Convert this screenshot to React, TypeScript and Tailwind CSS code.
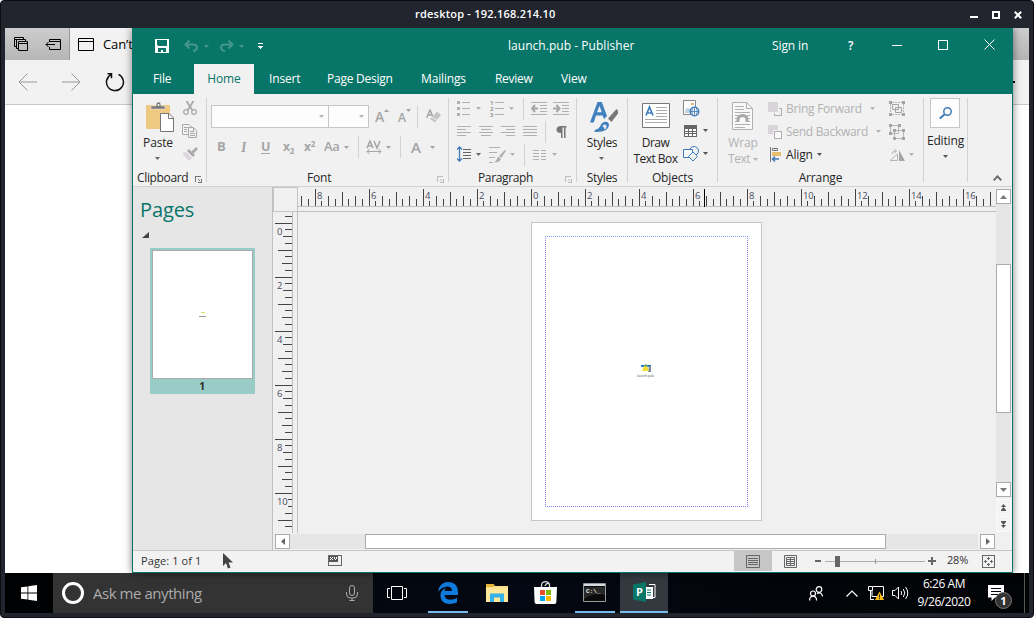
import React from "react";

type IconProps = { w: number; h: number; className?: string; crisp?: boolean; children: React.ReactNode };

function Icon({ w, h, className = "", crisp = false, children }: IconProps) {
  return (
    <svg
      width={w}
      height={h}
      viewBox={`0 0 ${w} ${h}`}
      fill="none"
      shapeRendering={crisp ? "crispEdges" : "auto"}
      className={`block shrink-0 ${className}`}
    >
      {children}
    </svg>
  );
}

const Caret = ({ className = "" }: { className?: string }) => (
  <Icon w={5} h={3} className={className}>
    <path d="M0 0h5L2.500 3z" fill="currentColor" />
  </Icon>
);

const Launcher = ({ className = "" }: { className?: string }) => (
  <Icon w={7} h={7} crisp className={className}>
    <path d="M0 0h6v1H1v5H0zM3 3h1v1H3zM4 4h1v1H4zM6 3h1v4H3V6h3z" fill="currentColor" />
  </Icon>
);

const VLine = ({ className = "" }: { className?: string }) => (
  <div className={`h-[22px] w-px shrink-0 bg-[#d2d2d2] ${className}`} />
);

const GroupLabel = ({ children }: { children: React.ReactNode }) => (
  <div className="flex h-4 items-center justify-center whitespace-nowrap">{children}</div>
);

const Lines = ({ rows, className = "" }: { rows: [number, number][]; className?: string }) => (
  <Icon w={14} h={12} crisp className={className}>
    {rows.map(([x, w], i) => (
      <rect key={i} x={x} y={i * 3} width={w} height={1} fill="currentColor" />
    ))}
  </Icon>
);

/* ---------- Browser in the background ---------- */

function Browser() {
  return (
    <div className="flex h-[545px] flex-col bg-white">
      <div className="flex h-8 bg-linear-to-b from-[#cdcdcd] to-[#b6b6b6]">
        <div className="flex w-[65px] items-center border-r border-[#999] text-black">
          <Icon w={14} h={14} className="ml-[9px]">
            <path d="M2.500 9.500h-2v-9h9v2M0 2.500h9M4 11.500h-1.500v-9h9v1.500M4.500 4.500h9v9h-9zM4 6.500h9" stroke="#000" />
          </Icon>
          <Icon w={16} h={11} className="ml-[17px]">
            <path d="M4.500 3V.5h11v10h-11V8M4.500 2.500h11M1 5.500h9M3.500 3L1 5.500 3.500 8" stroke="#000" />
          </Icon>
        </div>
        <div className="flex w-[300px] items-center bg-[#f2f2f2]">
          <Icon w={16} h={13} className="ml-2">
            <path d="M.5.5h15v12H.5zM0 3.500h16" stroke="#000" />
          </Icon>
          <span className="ml-[9px] pt-px text-[13px] tracking-[-0.1px] text-black">Can’t</span>
        </div>
      </div>
      <div className="flex h-[45px] items-center border-b border-[#c8c8c8] bg-[#f2f2f2]">
        <Icon w={19} h={18} className="ml-[13px]">
          <path d="M19 9H1M9.500.500L1 9l8.500 8.500" stroke="#999" />
        </Icon>
        <Icon w={19} h={18} className="ml-[25px]">
          <path d="M0 9h18M9.500.500L18 9l-8.500 8.500" stroke="#999" />
        </Icon>
        <Icon w={20} h={20} className="ml-6">
          <path d="M6 2.600A8.500 8.500 0 1 0 13.500 2.400M2.500 1.700h4v4.500" stroke="#111" strokeWidth="1.500" />
        </Icon>
        <div className="ml-auto mr-3.5 size-0.5 bg-black" />
      </div>
    </div>
  );
}

/* ---------- Publisher title and tabs ---------- */

function TitleRow() {
  return (
    <div className="flex h-9 items-center text-white">
      <Icon w={14} h={14} crisp className="ml-[22px]">
        <path d="M0 0h14v14H0z" fill="#fff" />
        <path d="M2 1h10v5l-1 1H3L2 6zM3 9h8v4H8v-2H6v2H3z" fill="#077568" />
      </Icon>
      <Icon w={15} h={12} className="ml-[15px]">
        <path d="M5.500.5L1.500 4.500l4 4M2 4.500h7q4 0 4 3t-4 3.500" stroke="#45978c" strokeWidth="2" />
      </Icon>
      <Caret className="ml-[5px] text-[#45978c]" />
      <Icon w={15} h={12} className="ml-[10px]">
        <path d="M9.500.5l4 4-4 4M13 4.500H6q-4 0-4 3T6 11" stroke="#45978c" strokeWidth="2" />
      </Icon>
      <Caret className="ml-[5px] text-[#45978c]" />
      <Icon w={5} h={6} crisp className="ml-[14px]">
        <path d="M0 0h5v1H0z" fill="#fff" />
        <path d="M0 3h5v1H4v1H3v1H2V5H1V4H0z" fill="#fff" />
      </Icon>
      <div className="ml-[245px] w-[264px] whitespace-nowrap pb-px text-[12px] tracking-[0.04px]">launch.pub - Publisher</div>
      <div className="w-[76px] whitespace-nowrap pb-px tracking-[-0.1px]">Sign in</div>
      <div className="w-[44px] pb-px text-[12px] font-semibold">?</div>
      <div className="-mt-px h-px w-[10px] bg-white" />
      <div className="-mt-[3px] ml-9 size-[10px] border border-white" />
      <Icon w={11} h={11} className="-mt-[3px] ml-[36px]">
        <path d="M.5.5l10 10M10.500.500l-10 10" stroke="#fff" />
      </Icon>
    </div>
  );
}

function TabRow() {
  return (
    <div className="flex h-[30px] items-center whitespace-nowrap text-white">
      <div className="w-[61px] pl-5">File</div>
      <div className="flex h-full w-[60px] items-center justify-center bg-[#f1f1f1] text-[#077568]">Home</div>
      <div className="ml-[15px] w-[58px]">Insert</div>
      <div className="w-[94px] tracking-[-0.250px]">Page Design</div>
      <div className="w-[74px]">Mailings</div>
      <div className="w-[66px] tracking-[-0.3px]">Review</div>
      <div>View</div>
    </div>
  );
}

/* ---------- Ribbon ---------- */

const group = "flex flex-col h-[92px] shrink-0";
const Divider = () => <div className="mt-1 h-[84px] w-px shrink-0 bg-[#d2d2d2]" />;

function Clipboard() {
  return (
    <div className={`${group} w-[73px]`}>
      <div className="flex h-[76px]">
        <div className="ml-[5px] flex w-[39px] flex-col items-center pt-2">
          <Icon w={28} h={30} className="ml-[5px]">
            <rect x="0" y="3" width="24" height="24" rx="1" fill="#eec980" />
            <path d="M5 7V4h5q0-4 2.500-4T15 4h4v3z" fill="#777" stroke="#f1f1f1" strokeWidth="0.500" />
            <circle cx="12.500" cy="3" r="1" fill="#fff" />
            <path d="M14.500 11.500h8.500l4.500 4.500v13.500h-13z" fill="#fff" stroke="#777" />
            <path d="M22.500 11.500v5h5" stroke="#777" />
          </Icon>
          <span className="ml-px mt-[2px] leading-[17px]">Paste</span>
          <Caret className="mt-[6px] text-[#666]" />
        </div>
        <div className="ml-[5px] flex w-[16px] flex-col items-center">
          <Icon w={14} h={14} className="mt-[7px]">
            <path d="M3.500 0l6 9.500M10.500 0l-6 9.500" stroke="#aaa" strokeWidth="1.800" />
            <circle cx="3" cy="11" r="2.300" stroke="#aaa" strokeWidth="1.300" />
            <circle cx="11" cy="11" r="2.300" stroke="#aaa" strokeWidth="1.300" />
          </Icon>
          <Icon w={16} h={14} className="mt-[9px]">
            <path d="M6 10.500H.5V.5H7l2 2v1M2 3.500h4M2 5.500h3M2 7.500h3M6.500 3.500h5l3 3v7h-8zM11.500 4v3M8 7.500h4M8 9.500h5M8 11.500h5" stroke="#aaa" />
          </Icon>
          <Icon w={16} h={14} className="mt-[9px]">
            <path d="M0 6l4-1 6 6-3 3z" fill="#dbd5db" />
            <path d="M5 4l2-2 6 6-2 2zM9.500 4.500L14 0l2 2-4.500 4.500z" fill="#aaa" />
          </Icon>
        </div>
      </div>
      <div className="flex h-4 items-center pl-[4px]">
        <span className="w-[58px] tracking-[-0.350px]">Clipboard</span>
        <Launcher className="mt-[3px] text-[#777]" />
      </div>
    </div>
  );
}

function FontGroup() {
  return (
    <div className={`${group} w-[241px]`}>
      <div className="flex h-[76px] flex-col pl-1 pt-[11px] text-[#a5a5a5]">
        <div className="flex h-[23px] items-center">
          <div className="flex h-[23px] w-[118px] items-center justify-end border border-[#c6c6c6] bg-[#fdfdfd] pr-[4px]">
            <Caret className="text-[#b5b5b5]" />
          </div>
          <div className="-ml-px flex h-[23px] w-[41px] items-center justify-end border border-[#c6c6c6] bg-[#fdfdfd] pr-[4px]">
            <Caret className="text-[#b5b5b5]" />
          </div>
          <div className="ml-[6px] mt-[1px] flex w-[22px]">
            <span className="text-[14px] font-semibold leading-none">A</span>
            <Icon w={5} h={3} className="-mt-[1px]"><path d="M0 3h5L2.500 0z" fill="#a5a5a5" /></Icon>
          </div>
          <div className="mt-[3px] flex w-[20px] pl-px">
            <span className="text-[12px] font-semibold leading-none">A</span>
            <Caret className="-mt-[3px]" />
          </div>
          <VLine />
          <div className="ml-[8px] flex">
            <Icon w={15} h={15}>
              <path d="M0.700 9L4 1l3 7M2 6h4" stroke="#a5a5a5" strokeWidth="1.500" />
              <path d="M11 2.500l4 3.500-6 7.500-5-3.500z" fill="#c5c5c5" />
              <path d="M5.500 7.500l5.500 4" stroke="#f1f1f1" />
            </Icon>
          </div>
        </div>
        <div className="mt-[8px] flex h-[22px] items-center whitespace-nowrap font-bold">
          <span className="ml-[6px] w-[22px] text-[13px]">B</span>
          <span className="w-[22px] pl-[2px] font-['Liberation_Serif'] text-[14px] italic">I</span>
          <span className="w-[22px] text-[12.500px]"><span className="inline-block h-[14px] border-b border-[#a5a5a5] leading-[14px]">U</span></span>
          <span className="w-[21px]">x<span className="relative top-[3px] text-[8px]">2</span></span>
          <span className="w-[20px]">x<span className="relative -top-[4px] text-[8px]">2</span></span>
          <span className="w-[20px] text-[13px] font-semibold tracking-[-0.300px]">Aa</span>
          <Caret />
          <VLine className="ml-[9px]" />
          <Icon w={16} h={14} className="ml-[7px]">
            <path d="M1 8L4 1l3 7M2 6h4M8 1l3 7 3-7" stroke="#a5a5a5" strokeWidth="1.500" />
            <path d="M1 11.500h14M3.500 9L1 11.500 3.500 14M12.500 9l2.500 2.500-2.500 2.500" stroke="#a5a5a5" />
          </Icon>
          <Caret className="ml-[4px]" />
          <VLine className="ml-[9px]" />
          <span className="ml-[10px] w-[19px] text-[15px] font-semibold">A</span>
          <Caret />
        </div>
      </div>
      <div className="flex h-4 items-center">
        <span className="w-[230px] pl-[100px]">Font</span>
        <Launcher className="mt-[3px] text-[#bbb]" />
      </div>
    </div>
  );
}

function ParagraphGroup() {
  return (
    <div className={`${group} w-[127px]`}>
      <div className="flex h-[76px] flex-col pl-2 pt-[3px] text-[#b0b0b0]">
        <div className="flex h-[23px] items-center">
          <Icon w={14} h={16} crisp className="-mt-px">
            <path d="M0 1h3v3H0zM0 7h3v3H0zM0 13h3v3H0zM5 2h8v1H5zM5 8h8v1H5zM5 14h8v1H5z" fill="#b0b0b0" />
          </Icon>
          <Caret className="ml-[5px]" />
          <div className="ml-[9px] flex w-[14px]">
            <div className="flex w-[5px] flex-col text-[6px] font-bold leading-[6px] text-[#999]"><span>1</span><span>2</span><span>3</span></div>
            <Icon w={9} h={16} crisp><path d="M0 2h9v1H0zM0 8h9v1H0zM0 14h9v1H0z" fill="#b0b0b0" /></Icon>
          </div>
          <Caret className="ml-[5px]" />
          <VLine className="ml-[9px]" />
          <Icon w={16} h={13} className="ml-[7px]">
            <path d="M0 .5h16M9 3.500h7M9 6.500h7M9 9.500h7M0 12.500h16" stroke="#b0b0b0" />
            <path d="M1 6.500h6M4 3L1 6.500 4 10" stroke="#a5a5a5" strokeWidth="2" />
          </Icon>
          <Icon w={16} h={13} className="ml-[6px]">
            <path d="M0 .5h16M9 3.500h7M9 6.500h7M9 9.500h7M0 12.500h16" stroke="#b0b0b0" />
            <path d="M0 6.500h6M3.500 3L6.500 6.500 3.500 10" stroke="#a5a5a5" strokeWidth="2" />
          </Icon>
        </div>
        <div className="flex h-[23px] items-center">
          <Lines rows={[[0, 14], [0, 9], [0, 14], [0, 9]]} />
          <Lines className="ml-2" rows={[[0, 14], [2, 10], [0, 14], [2, 10]]} />
          <Lines className="ml-2" rows={[[0, 14], [5, 9], [0, 14], [5, 9]]} />
          <Lines className="ml-2" rows={[[0, 14], [0, 14], [0, 14], [0, 14]]} />
          <VLine className="ml-2" />
          <Icon w={11} h={12} className="ml-[10px]">
            <path d="M10.500 0v1.500H9.500V12H8V1.500H6.500V12H5V7Q.5 7 .5 3.500T5 0z" fill="#777" />
          </Icon>
        </div>
        <div className="flex h-[23px] items-center">
          <Icon w={14} h={16} className="-mt-px">
            <path d="M2.500 1v14M0 3.500L2.500 1 5 3.500M0 12.500L2.500 15 5 12.500" stroke="#3f7ab8" strokeWidth="1.300" />
            <path d="M6 3.500h8M6 6.500h8M6 9.500h8M6 12.500h8" stroke="#666" />
          </Icon>
          <Caret className="ml-[5px] text-[#666]" />
          <Icon w={17} h={16} className="ml-[8px]">
            <path d="M0 .5h11M0 5.500h8M0 10.500h6M0 15.500h4" stroke="#b0b0b0" />
            <path d="M16 3l1 1-5 7-2-2zM9 9.500l3 2.500q-2 4-7 3.500 2-1 4-6z" fill="#b0b0b0" />
          </Icon>
          <Caret className="ml-[4px]" />
          <VLine className="ml-[9px]" />
          <Icon w={14} h={10} crisp className="ml-2">
            <path d="M0 0h6v1H0zM8 0h5v1H8zM0 3h6v1H0zM8 3h5v1H8zM0 6h6v1H0zM8 6h5v1H8zM0 9h6v1H0zM8 9h5v1H8z" fill="#b0b0b0" />
          </Icon>
          <Caret className="ml-[5px]" />
        </div>
      </div>
      <div className="flex h-4 items-center">
        <span className="w-[116px] pl-[29px] tracking-[-0.350px]">Paragraph</span>
        <Launcher className="mt-[3px] text-[#bbb]" />
      </div>
    </div>
  );
}

function StylesGroup() {
  return (
    <div className={`${group} w-[50px] tracking-[-0.3px]`}>
      <div className="flex h-[76px] flex-col items-center pt-2">
        <Icon w={28} h={30} className="ml-[3px]">
          <path d="M0 20.500L7.500 0h4.300L17 14l-3 3-1.300-3.500H6L3.800 20.500zM7 10.300h4.800L9.500 3.800z" fill="#4080bf" fillRule="evenodd" />
          <path d="M26.500 7L28 8.500v3L21.500 20 18 16.500z" fill="#777" />
          <path d="M14 20q5-1 5 3.500-1 6-12 6.500Q3 30 5 28q4-1 5.500-4.500Q11.500 20.500 14 20z" fill="#4080bf" />
          <path d="M14 22.500q3 0 2.500 2.500-.500 2-2 2.500 0-3-2.500-3z" fill="#f1f1f1" />
        </Icon>
        <span className="mt-[2px] leading-[17px]">Styles</span>
        <Caret className="-ml-px mt-[6px] text-[#666]" />
      </div>
      <GroupLabel>Styles</GroupLabel>
    </div>
  );
}

function ObjectsGroup() {
  return (
    <div className={`${group} w-[89px]`}>
      <div className="flex h-[76px]">
        <div className="flex w-[54px] shrink-0 flex-col items-center pl-[2px] pt-[9px]">
          <Icon w={28} h={25}>
            <path d="M.5.500h27v24H.5z" fill="#fff" stroke="#777" />
            <path d="M4 12.500L7.500 4l3.500 8.500M5.300 10h4.500" stroke="#4080bf" strokeWidth="1.700" />
            <path d="M14 4.500h11M14 7.500h11M14 10.500h11M14 13.500h11M3 16.500h22M3 19.500h22" stroke="#aaa" />
          </Icon>
          <span className="-ml-px mt-[7px] whitespace-nowrap text-center leading-4 tracking-[-0.550px]">Draw<br />Text Box</span>
        </div>
        <div className="flex flex-col">
          <Icon w={17} h={17} className="ml-px mt-[6px]">
            <path d="M12.500 7V.500h-12v14H8" fill="#fdfdfd" stroke="#888" />
            <path d="M2 13q0-5 3-5t3 5zM9 3h2v2H9z" fill="#bcd0e4" />
            <circle cx="9" cy="4" r="1.200" fill="#edb55c" />
            <circle cx="11.500" cy="11.500" r="4.300" fill="#f1f1f1" stroke="#3f7ab8" strokeWidth="1.300" />
            <path d="M7 11.500h9M11.500 7v9M9.500 8q-1.500 3.500 0 7M13.500 8q1.500 3.500 0 7" stroke="#3f7ab8" strokeWidth=".8" />
          </Icon>
          <div className="mt-[2px] flex h-[23px] items-center">
            <Icon w={13} h={12} crisp className="ml-[2px]">
              <path d="M0 0h13v12H0z" fill="#666" />
              <path d="M1 4h3v2H1zM5 4h3v2H5zM9 4h3v2H9zM1 7h3v1H1zM5 7h3v1H5zM9 7h3v1H9zM1 9h3v2H1zM5 9h3v2H5zM9 9h3v2H9z" fill="#fff" />
            </Icon>
            <Caret className="ml-[6px] text-[#555]" />
          </div>
          <div className="flex h-[23px] items-center">
            <Icon w={17} h={16} className="ml-px">
              <circle cx="11" cy="5" r="4.500" fill="#f1f1f1" stroke="#3f7ab8" />
              <path d="M.5 3.500h9v8h-9z" fill="#fafafa" stroke="#3f7ab8" />
              <path d="M10 6l4.500 4.500L10 15l-4.500-4.500z" fill="#f1f1f1" stroke="#3f7ab8" />
            </Icon>
            <Caret className="ml-[3px] text-[#555]" />
          </div>
        </div>
      </div>
      <GroupLabel>Objects</GroupLabel>
    </div>
  );
}

function ArrangeGroup() {
  return (
    <div className={`${group} w-[205px]`}>
      <div className="flex h-[76px] text-[#b2b2b2]">
        <div className="flex w-[50px] flex-col items-center pt-2">
          <Icon w={21} h={28} className="-ml-px">
            <path d="M.500.500h14l6 6v21H.500z" fill="#f8f8f8" stroke="#b0b0b0" />
            <path d="M14.500.5v6h6M3 4.500h9M3 7.500h9M3 10.500h15M3 19.500h3M15 19.500h3M3 22.500h15M3 25.500h10M3 13.500h3M15 13.500h3M3 16.500h2M16 16.500h2" stroke="#b0b0b0" />
            <path d="M6 20v-2q0-4.500 4.500-4.500T15 18v2" stroke="#a8a8a8" strokeWidth="3" />
          </Icon>
          <span className="mt-[5px] leading-4">Wrap</span>
          <span className="flex items-center gap-[3px] leading-4 tracking-[-0.5px]">Text<Caret /></span>
        </div>
        <div className="flex w-[121px] flex-col pt-[3px]">
          <div className="flex h-[23px] items-center whitespace-nowrap">
            <Icon w={14} h={14} crisp>
              <path d="M0 0h10v10H0z" fill="#d9d4d9" />
              <path d="M11 6h3v8H6v-3h1v2h6V7h-2z" fill="#b0b0b0" />
            </Icon>
            <span className="ml-1 w-[83px] tracking-[-0.250px]">Bring Forward</span>
            <Caret className="ml-[1px]" />
          </div>
          <div className="flex h-[23px] items-center whitespace-nowrap">
            <Icon w={14} h={14} crisp>
              <path d="M0 0h10v5H5v4H0z" fill="#d9d4d9" />
              <path d="M6 6h8v8H6z" fill="#b0b0b0" />
              <path d="M7 7h6v6H7z" fill="#f8f8f8" />
            </Icon>
            <span className="ml-1 w-[90px] tracking-[-0.3px]">Send Backward</span>
            <Caret />
          </div>
          <div className="flex h-[23px] items-center text-[#262626]">
            <Icon w={12} h={15} className="ml-[2px]">
              <path d="M.5 0v15M2.500 1.500h5v2h-5z" stroke="#777" />
              <path d="M2 5h9v4H2z" fill="#e9bd70" />
              <path d="M2.500 12H9M5 9.500L2.500 12 5 14.500" stroke="#3f7ab8" strokeWidth="1.500" />
            </Icon>
            <span className="ml-1 w-[30px]">Align</span>
            <Caret className="ml-px text-[#555]" />
          </div>
        </div>
        <div className="flex flex-col pt-[3px]">
          <div className="flex h-[23px] items-center">
            <Icon w={16} h={15}>
              <path d="M3 1.500h10M3 13.500h10M1.500 3v9M14.500 3v9" stroke="#b5b5b5" strokeDasharray="2 1" />
              <path d="M0 0h3v3H0zM13 0h3v3h-3zM0 12h3v3H0zM13 12h3v3h-3z" fill="#a5a5a5" />
              <path d="M3.500 3.500h6v5h-6zM6.500 6.500h6v5h-6z" stroke="#a5a5a5" />
            </Icon>
          </div>
          <div className="flex h-[23px] items-center">
            <Icon w={16} h={16}>
              <path d="M1.500 1.500h8v8h-8zM5.500 6.500h9v8h-9z" fill="#f1f1f1" stroke="#b5b5b5" />
              <path d="M0 0h3v3H0zM9 0h3v3H9zM0 8h3v3H0zM4 5h3v3H4zM13 5h3v3h-3zM4 13h3v3H4zM13 13h3v3h-3z" fill="#a5a5a5" />
            </Icon>
          </div>
          <div className="flex h-[23px] items-center">
            <Icon w={16} h={12}>
              <path d="M10 1l6 11h-6z" fill="#a5a5a5" />
              <path d="M8.500 5v6.500H1zM3 5q0-3 4-3M5.500 0l2 2-2 2" stroke="#b5b5b5" />
            </Icon>
            <Caret className="ml-[4px]" />
          </div>
        </div>
      </div>
      <GroupLabel>Arrange</GroupLabel>
    </div>
  );
}

function Ribbon() {
  return (
    <div className="flex h-[93px] border-b border-[#d2d2d2] bg-[#f1f1f1] text-[#262626]">
      <Clipboard />
      <Divider />
      <FontGroup />
      <Divider />
      <ParagraphGroup />
      <Divider />
      <StylesGroup />
      <Divider />
      <ObjectsGroup />
      <Divider />
      <ArrangeGroup />
      <Divider />
      <div className={`${group} w-[43px] items-center pt-1`}>
        <div className="-ml-px flex size-[30px] items-center justify-center border border-[#c6c6c6] bg-[#fdfdfd]">
          <Icon w={13} h={12}>
            <circle cx="8.500" cy="4.500" r="3.700" stroke="#3f7ab8" strokeWidth="1.500" />
            <path d="M5.500 7.500L.800 11.500" stroke="#3f7ab8" strokeWidth="2" />
          </Icon>
        </div>
        <span className="mt-[5px] leading-4">Editing</span>
        <Caret className="mt-[6px] text-[#555]" />
      </div>
      <Divider />
      <div className="flex flex-1 items-end justify-end pb-[5px] pr-[10px]">
        <Icon w={9} h={6}>
          <path d="M.7 5.300l3.800-4 3.800 4" stroke="#666" strokeWidth="1.800" />
        </Icon>
      </div>
    </div>
  );
}

/* ---------- Work area ---------- */

const tickLength = (i: number) => (i % 8 === 0 ? 17 : i % 4 === 0 ? 14 : i % 2 === 0 ? 10 : 7);
const startsNumber = (i: number) => (((i % 8) + 8) % 8) === 1;

function HorizontalRuler() {
  const ticks = Array.from({ length: 103 }, (_, k) => k - 34);
  return (
    <Icon w={698} h={25}>
      <g shapeRendering="crispEdges">
        {ticks.map((i) => {
          const len = startsNumber(i) ? 5 : tickLength(i);
          return <rect key={i} x={Math.floor(233 + i * 6.75)} y={19 - len} width={1} height={len} fill="#444" />;
        })}
        <rect x={0} y={19} width={698} height={1} fill="#c0c0c0" />
        <rect x={0} y={24} width={698} height={1} fill="#c0c0c0" />
        <rect x={406} y={2} width={1} height={18} fill="#000" />
      </g>
      {[-8, -6, -4, -2, 0, 2, 4, 6, 8, 10, 12, 14, 16].map((n) => (
        <text key={n} x={235 + n * 27} y={12} fontSize={9.5} fill="#4b4b62" letterSpacing={-0.2}>
          {Math.abs(n)}
        </text>
      ))}
    </Icon>
  );
}

function VerticalRuler() {
  const ticks = Array.from({ length: 47 }, (_, k) => k - 1);
  return (
    <Icon w={25} h={321}>
      <g shapeRendering="crispEdges">
        {ticks.map((i) => {
          const len = i === 41 || i === 42 ? 4 : i % 8 === 2 ? 9 : tickLength(i);
          return <rect key={i} x={19 - len} y={Math.floor(11 + i * 6.75)} width={len} height={1} fill="#444" />;
        })}
        <rect x={19} y={0} width={1} height={321} fill="#c0c0c0" />
        <rect x={24} y={0} width={1} height={321} fill="#c0c0c0" />
      </g>
      {[0, 2, 4, 6, 8, 10].map((n) => (
        <text key={n} x={4} y={23 + n * 27} fontSize={9.5} fill="#4b4b62" letterSpacing={-0.2}>
          {n}
        </text>
      ))}
    </Icon>
  );
}

function PagesPanel() {
  return (
    <div className="flex w-[139px] shrink-0 flex-col bg-[#e6e6e6]">
      <div className="ml-[7px] mt-[9px] text-[20px] leading-7 tracking-[-0.1px] text-[#077568]">Pages</div>
      <Icon w={7} h={6} className="ml-[9px] mt-[8px]">
        <path d="M7 0v6H0z" fill="#444" />
      </Icon>
      <div className="ml-[17px] mt-[10px] flex h-[146px] w-[105px] flex-col items-center bg-[#99ccc6] pt-[2px]">
        <div className="flex h-[129px] w-[101px] items-center justify-center border border-[#ababab] bg-white">
          <Icon w={7} h={5}>
            <path d="M2 .5h4" stroke="#dde35b" />
            <path d="M0 4.500h7" stroke="#999" />
          </Icon>
        </div>
        <span className="-ml-px text-[11px] font-bold leading-[14px] text-[#333]">1</span>
      </div>
    </div>
  );
}

function Canvas() {
  return (
    <div className="flex flex-1 bg-[#f0f0f0] pl-[233px] pt-[10px]">
      <div className="flex h-[299px] w-[231px] border border-[#c6c6c6] bg-white px-[13px] pt-[13px]">
        <Icon w={203} h={271}>
          <path d="M.5 0v271M202.500 0v271M0 270.500h203" stroke="#7f82f5" strokeDasharray="1 1" />
          <path d="M0 .5h203" stroke="#7f9cf8" strokeDasharray="1 1" />
          <g transform="translate(92 128)">
            <path d="M4 1h10v2H4z" fill="#2f7cc4" />
            <path d="M12 2h2v6h-3z" fill="#7d8c99" />
            <path d="M5 7l2-5h3l2 5z" fill="#f0e032" />
            <circle cx="9" cy="1.500" r="1.300" fill="#77ae62" />
            <text x="0" y="13" fontSize="3.500" fill="#666">launch.pub</text>
          </g>
        </Icon>
      </div>
    </div>
  );
}

function VerticalScroll() {
  const small = "flex h-4 w-[15px] items-center justify-center bg-[#f4f4f4] border border-[#fafafa]";
  return (
    <div className="flex w-[16px] shrink-0 flex-col bg-[#f0f0f0] pt-[2px]">
      <div className="flex size-[15px] items-center justify-center border border-[#ababab] bg-white">
        <Icon w={7} h={4}><path d="M0 4h7L3.500 0z" fill="#777" /></Icon>
      </div>
      <div className="h-[278px] w-[15px] bg-[#e6e6e6] pt-[60px]">
        <div className="h-[149px] border border-[#ababab] bg-white" />
      </div>
      <div className="flex size-[15px] items-center justify-center border border-[#ababab] bg-white">
        <Icon w={7} h={4}><path d="M0 0h7L3.500 4z" fill="#777" /></Icon>
      </div>
      <div className={`${small} mt-[2px]`}>
        <Icon w={5} h={7}><path d="M0 3h5L2.500 0zM0 6h5L2.500 3zM0 6h5v1H0z" fill="#555" /></Icon>
      </div>
      <div className={`${small} mt-[1px]`}>
        <Icon w={5} h={7}><path d="M0 1h5L2.500 4zM0 4h5L2.500 7zM0 0h5v1H0z" fill="#555" /></Icon>
      </div>
    </div>
  );
}

function HorizontalScroll() {
  return (
    <div className="flex h-[17px] items-start bg-[#f0f0f0] pl-[2px] pt-px">
      <div className="flex size-[15px] items-center justify-center border border-[#ababab] bg-white">
        <Icon w={4} h={7}><path d="M4 0v7L0 3.500z" fill="#666" /></Icon>
      </div>
      <div className="h-[15px] w-[688px] bg-[#e6e6e6] pl-[75px]">
        <div className="h-[15px] w-[521px] border border-[#ababab] bg-white" />
      </div>
      <div className="ml-[2px] flex size-[15px] items-center justify-center border border-[#ababab] bg-white">
        <Icon w={4} h={7}><path d="M0 0v7l4-3.500z" fill="#666" /></Icon>
      </div>
    </div>
  );
}

function StatusBar() {
  return (
    <div className="flex h-[22px] items-center border-t border-[#c6c6c6] bg-[#f2f2f2] pb-px text-[#333]">
      <span className="ml-2 w-[82px] whitespace-nowrap pb-px text-[11px] leading-4 tracking-[0.1px]">Page: 1 of 1</span>
      <Icon w={10} h={16}>
        <path d="M0 0v13l3-3 2 5.500 2.500-1L5.500 9.500H10z" fill="#444" />
      </Icon>
      <Icon w={14} h={11} crisp className="-mt-px ml-[95px]">
        <path d="M0 0h14v11H0zM1 1v9h12V1z" fill="#666" fillRule="evenodd" />
        <path d="M1 1h9v6H1z" fill="#555" />
        <path d="M2 2h1v1H2zM4 2h1v1H4zM3 3h1v1H3zM2 4h1v1H2zM4 4h1v1H4zM6 2h1v2H6zM8 2h1v2H8zM7 4h1v1H7z" fill="#fff" />
      </Icon>
      <div className="ml-[392px] flex h-[20px] w-[38px] items-center justify-center bg-[#c6c6c6]">
        <Icon w={14} h={13}>
          <path d="M.5.500h13v12H.5zM2 3.500h10M2 5.500h10M2 7.500h10M2 9.500h10" stroke="#666" />
        </Icon>
      </div>
      <Icon w={13} h={13} className="ml-3">
        <path d="M.5.500h12v12H.5zM2.500 2.500h8v8h-8zM6.500 2v9M3 4.500h8M3 6.500h8M3 8.500h8" stroke="#666" />
      </Icon>
      <div className="ml-[18px] h-0.5 w-[6px] bg-[#666]" />
      <Icon w={100} h={12} crisp className="ml-1">
        <path d="M0 6h100v1H0z" fill="#ababab" />
        <path d="M50 4h1v5h-1z" fill="#999" />
        <path d="M10 1h5v11h-5z" fill="#666" />
      </Icon>
      <Icon w={8} h={8} crisp className="ml-[3px]">
        <path d="M0 3h8v2H0zM3 0h2v8H3z" fill="#666" />
      </Icon>
      <span className="ml-[11px] w-[35px] pb-px text-[11px] tracking-[-0.2px]">28%</span>
      <Icon w={13} h={13} crisp>
        <path d="M0 0h13v13H0zM1 1v11h11V1z" fill="#666" fillRule="evenodd" />
        <path d="M6 2h1v3H6zM6 8h1v3H6zM2 6h3v1H2zM8 6h3v1H8zM5 3h3v1H5zM5 9h3v1H5zM3 5h1v3H3zM9 5h1v3H9z" fill="#666" />
      </Icon>
    </div>
  );
}

function Publisher() {
  return (
    <div className="absolute left-[127px] top-0 flex h-[545px] w-[881px] flex-col border-x border-b border-[#077568] bg-[#077568] text-[12px] tracking-[-0.150px] shadow-[0_0_8px_rgba(0,0,0,0.5)]">
      <TitleRow />
      <TabRow />
      <Ribbon />
      <div className="flex h-[363px]">
        <PagesPanel />
        <div className="w-px shrink-0 bg-[#c0c0c0]" />
        <div className="flex flex-1 flex-col">
          <div className="flex h-[346px]">
            <div className="flex flex-1 flex-col bg-[#f0f0f0]">
              <div className="flex h-[25px] shrink-0">
                <div className="size-[25px] shrink-0 border border-[#c6c6c6]" />
                <HorizontalRuler />
              </div>
              <div className="flex h-[321px]">
                <VerticalRuler />
                <Canvas />
              </div>
            </div>
            <VerticalScroll />
          </div>
          <HorizontalScroll />
        </div>
      </div>
      <StatusBar />
    </div>
  );
}

/* ---------- Taskbar ---------- */

function Taskbar() {
  return (
    <div className="flex h-10 bg-linear-to-r from-[#020509] via-[#040812] to-[#020305] text-white">
      <div className="flex w-12 items-center justify-center bg-[#000103]">
        <Icon w={16} h={16}>
          <path d="M0 2.300L6.500 1.400v6.200H0zM7.300 1.300L16 0v7.600H7.300zM0 8.400h6.500v6.200L0 13.700zM7.300 8.400H16V16l-8.700-1.300z" fill="#fff" />
        </Icon>
      </div>
      <div className="flex w-[320px] items-center bg-[#333]">
        <div className="ml-[9px] size-[22px] rounded-full border-[3px] border-white" />
        <span className="ml-[9px] w-[253px] text-[15px] tracking-[-0.450px] text-[#ababab]">Ask me anything</span>
        <Icon w={12} h={16} className="-mt-px">
          <rect x="3.500" y=".5" width="5" height="10" rx="2.500" stroke="#aaa" />
          <path d="M.5 7v2q0 4 4 4h3q4 0 4-4V7M6 13v2.500M3.500 15.500h5" stroke="#aaa" />
        </Icon>
      </div>
      <div className="flex w-[55px] items-center pl-3.5">
        <Icon w={20} h={14}>
          <path d="M4.500.500h11v13h-11zM3 2.500H.5v9H3M17 2.500h2.500v9H17" stroke="#fff" />
        </Icon>
      </div>
      <div className="flex w-10 flex-col items-center justify-end border-b-2 border-[#76b9ed]">
        <Icon w={20} h={22} className="mb-[7px]">
          <path d="M0 9.800Q1.500 0 10.500 0 20 0 20 10.500V13H6.500q.5 4.800 6 4.800 3.500 0 6.500-1.800v4.300Q16 22 11.500 22 3.500 22 2.500 14.500 2 8.500 8 5.800 6.700 7.200 6.500 9H14q-.2-4.500-4.800-4.500Q4 4.700 0 9.800z" fill="#0f7bdc" />
        </Icon>
      </div>
      <div className="flex w-[58px] items-center justify-center">
        <Icon w={22} h={19}>
          <path d="M0 1h8l1 1h13v16H0z" fill="#fbe08c" />
          <path d="M0 0h8v3H0z" fill="#e8b339" />
          <path d="M0 4h22v14H0z" fill="#ffe799" />
          <path d="M4 18V9.500h14V18h-4v-4.500H8V18z" fill="#35b2ea" />
        </Icon>
      </div>
      <div className="flex w-[38px] items-center justify-center">
        <Icon w={23} h={23} className="-mt-0.5">
          <path d="M7.500 6V4Q8 .700 11.500.700T15.500 4v2M11 5q1-3 3.500-2.500" stroke="#ddd" strokeWidth="1.300" />
          <path d="M0 6h23l-.6 15q-.1 2-2 2H2.600q-1.900 0-2-2z" fill="#fff" />
          <path d="M6 9h5v5H6z" fill="#e8502d" />
          <path d="M12 9h5v5h-5z" fill="#7fba00" />
          <path d="M6 15h5v5H6z" fill="#00a4ef" />
          <path d="M12 15h5v5h-5z" fill="#ffb900" />
        </Icon>
      </div>
      <div className="ml-[11px] flex w-10 items-center justify-center border-b-2 border-[#76b9ed]">
        <Icon w={23} h={19} className="-ml-px">
          <path d="M.5.500h22v18H.5z" fill="#0a0a0a" stroke="#999" />
          <path d="M1 1h21v2H1z" fill="#d5dbe0" />
          <path d="M1 4h21v8Q12 9 1 16z" fill="#282828" />
          <text x="3" y="9.500" fontSize="6" fontWeight="bold" fill="#eee" fontFamily="Liberation Mono">C:\_</text>
        </Icon>
      </div>
      <div className="ml-[5px] flex w-12 items-center justify-center border-b-2 border-[#76b9ed] bg-[#34393f]">
        <Icon w={23} h={20}>
          <path d="M16 2.500h6v13h-4" stroke="#fff" />
          <path d="M12 5h8v12h-8z" fill="#fff" />
          <path d="M14 8h4M14 10.500h4M14 13h4" stroke="#077568" />
          <path d="M0 2.500L13 0v20L0 17.500z" fill="#077568" />
          <text x="3" y="14" fontSize="11" fontWeight="bold" fill="#fff">P</text>
        </Icon>
      </div>
      <div className="ml-[141px] flex items-center">
        <Icon w={14} h={15}>
          <circle cx="10" cy="3.500" r="2.800" stroke="#fff" strokeWidth="1.200" />
          <circle cx="4" cy="7.500" r="2.500" stroke="#fff" strokeWidth="1.200" />
          <path d="M.6 14.500q0-4.300 3.400-4.300t3.600 4.300M8 7.500q5-2 5.500 3" stroke="#fff" strokeWidth="1.200" />
        </Icon>
        <Icon w={12} h={7} className="ml-[23px]">
          <path d="M.5 6.500L6 1l5.500 5.500" stroke="#fff" strokeWidth="1.200" />
        </Icon>
        <Icon w={16} h={14} className="ml-[10px]">
          <path d="M5 .5h10.500v10H4v-6M.5.500h4v4h-4zM2.500 5v8.500H6" stroke="#fff" />
          <path d="M11.500 5.500L16 14H7z" fill="#fbbc14" />
          <path d="M11.500 8.500v3M11.500 12.200v1" stroke="#222" />
        </Icon>
        <Icon w={17} h={14} className="ml-2">
          <path d="M.5 4.500H3L6.500 1v12L3 9.500H.5zM9 5q1.500 2 0 4M11.300 3q3 4 0 8M13.500 1q4.500 6 0 12" stroke="#fff" />
        </Icon>
      </div>
      <div className="ml-[6px] flex w-[58px] flex-col items-center whitespace-nowrap pt-[2px] text-[12px] leading-[18px] tracking-[-0.450px]">
        <span>6:26 AM</span>
        <span>9/26/2020</span>
      </div>
      <div className="relative ml-[15px] w-[36px]">
        <Icon w={16} h={16} className="mt-3">
          <path d="M0 0h16v12.500H7L3.500 16v-3.500H0z" fill="#fff" />
          <path d="M3 3.500h10M3 6.500h10M3 9.500h7" stroke="#05080e" />
        </Icon>
        <div className="absolute left-[7px] top-[19px] flex size-[17px] items-center justify-center rounded-full border border-[#777] bg-[#333] text-[11px] font-bold leading-none">1</div>
      </div>
      <div className="w-px bg-[#555]" />
    </div>
  );
}

export default function App() {
  return (
    <div className="h-[618px] w-[1034px] overflow-hidden bg-white font-['Open_Sans','Noto_Sans',sans-serif]">
      <div className="flex h-full w-full flex-col rounded-[4px] border border-[#0b0c10] bg-[#22252e]">
        <div className="flex h-[27px] shrink-0 items-center text-white">
          <div className="ml-[414px] w-[555px] whitespace-nowrap pb-[2px] text-[11px] font-semibold leading-4 tracking-[0.220px]">rdesktop - 192.168.214.10</div>
          <div className="mt-[5px] h-0.5 w-2 bg-white" />
          <div className="ml-[14px] size-2 border-2 border-white" />
          <Icon w={8} h={8} className="ml-[14px]">
            <path d="M.8.800l6.400 6.400M7.200.800L.800 7.200" stroke="#fff" strokeWidth="2" />
          </Icon>
        </div>
        <div className="relative ml-1 flex h-[585px] w-[1024px] shrink-0 flex-col overflow-hidden">
          <Browser />
          <Publisher />
          <Taskbar />
        </div>
      </div>
    </div>
  );
}
